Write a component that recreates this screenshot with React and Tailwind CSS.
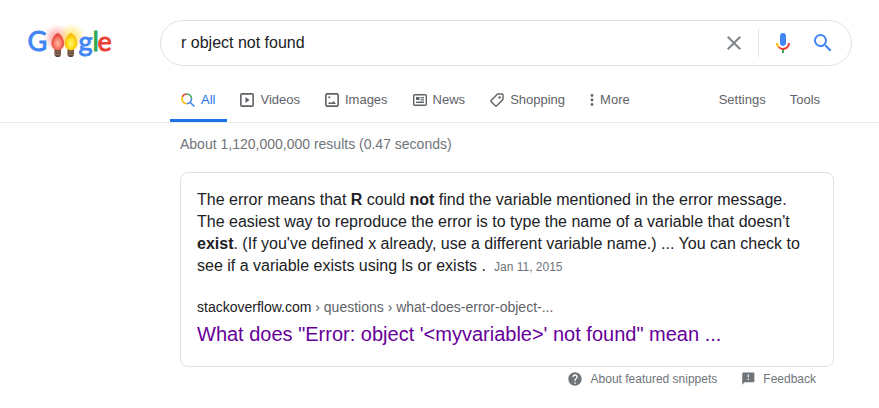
const TABS = [
  { label: 'Videos', Icon: VideoIcon },
  { label: 'Images', Icon: ImageIcon },
  { label: 'News', Icon: NewsIcon },
  { label: 'Shopping', Icon: TagIcon },
];

function Logo() {
  return (
    <svg width="100" height="46" viewBox="0 0 100 46" role="img" aria-label="Google" className="block">
      <defs>
        <radialGradient id="redGlow">
          <stop offset="0" stopColor="#f44336" stopOpacity="0.6" />
          <stop offset="0.5" stopColor="#f66" stopOpacity="0.35" />
          <stop offset="1" stopColor="#f88" stopOpacity="0" />
        </radialGradient>
        <radialGradient id="yellowGlow">
          <stop offset="0" stopColor="#ffd600" stopOpacity="0.7" />
          <stop offset="0.5" stopColor="#ffe14d" stopOpacity="0.45" />
          <stop offset="1" stopColor="#fff176" stopOpacity="0" />
        </radialGradient>
        <radialGradient id="redBulb" cy="0.6">
          <stop offset="0" stopColor="#ffc0a0" />
          <stop offset="0.5" stopColor="#f98370" />
          <stop offset="1" stopColor="#e8453a" />
        </radialGradient>
        <radialGradient id="yellowBulb" cy="0.6">
          <stop offset="0" stopColor="#fff27a" />
          <stop offset="0.55" stopColor="#ffe01e" />
          <stop offset="1" stopColor="#f9b90a" />
        </radialGradient>
      </defs>
      <circle cx="37" cy="18" r="14" fill="url(#redGlow)" />
      <circle cx="52" cy="17" r="14" fill="url(#yellowGlow)" />
      <g fontFamily="Lato, sans-serif" fontSize="27" strokeWidth="0.9">
        <text x="7.500" y="30.500" fill="#4285f4" stroke="#4285f4">G</text>
        <text x="58.500" y="30.500" fill="#4285f4" stroke="#4285f4">g</text>
        <text x="72.500" y="30.500" fill="#34a853" stroke="#34a853">l</text>
        <text x="77.500" y="30.500" fill="#ea4335" stroke="#ea4335">e</text>
      </g>
      <path d="M34.500 29h6.500v6l-1.500 2h-3.500l-1.500-2z" fill="#65493b" />
      <path d="M34.500 32h6.500M34.500 34.500h6.500" stroke="#a08468" strokeWidth="0.800" />
      <path d="M47.500 29h6.500v6l-1.500 2h-3.500l-1.500-2z" fill="#65493b" />
      <path d="M47.500 32h6.500M47.500 34.500h6.500" stroke="#a08468" strokeWidth="0.800" />
      <path d="M37.800 13c3.500 1.500 6.300 6 6.300 10.500 0 3.500-2.500 6.800-6.300 6.800s-6.300-3.300-6.300-6.800c0-4.500 2.800-9 6.300-10.500z" fill="url(#redBulb)" />
      <path d="M50.900 13c3.500 1.500 6.300 6 6.300 10.500 0 3.500-2.500 6.800-6.300 6.800s-6.300-3.300-6.300-6.800c0-4.500 2.800-9 6.300-10.500z" fill="url(#yellowBulb)" />
    </svg>
  );
}

function CloseIcon() {
  return (
    <svg width="24" height="24" viewBox="0 0 24 24" fill="#80868b" aria-hidden="true">
      <path d="M19 6.410L17.590 5 12 10.590 6.410 5 5 6.410 10.590 12 5 17.590 6.410 19 12 13.410 17.590 19 19 17.590 13.410 12z" />
    </svg>
  );
}

function MicIcon() {
  return (
    <svg width="24" height="24" viewBox="0 0 24 24" aria-hidden="true">
      <path fill="#4285f4" d="M12 15c1.660 0 3-1.310 3-2.970V4.970C15 3.310 13.660 2 12 2S9 3.310 9 4.970v7.060C9 13.690 10.340 15 12 15z" />
      <path fill="#34a853" d="M11 18.080h2V22h-2z" />
      <path fill="#fbbc05" d="M7.050 16.870C5.780 15.590 5 13.870 5 12h2c0 1.380.560 2.570 1.420 3.470l-1.370 1.400z" />
      <path fill="#ea4335" d="M12 16.930a4.970 5.250 0 0 1-3.540-1.550L7.050 16.870c1.270 1.260 2.990 2.060 4.950 2.060 3.920 0 7-3.120 7-6.930h-2c0 2.700-2.240 4.930-5 4.930z" />
    </svg>
  );
}

function SearchIcon() {
  return (
    <svg width="24" height="24" viewBox="0 0 24 24" fill="#4285f4" aria-hidden="true">
      <path d="M15.500 14h-.790l-.280-.270A6.471 6.471 0 0 0 16 9.500 6.500 6.500 0 1 0 9.500 16c1.610 0 3.090-.590 4.230-1.570l.270.280v.790l5 4.990L20.490 19l-4.990-5zm-6 0C7.010 14 5 11.990 5 9.500S7.010 5 9.500 5 14 7.010 14 9.500 11.990 14 9.500 14z" />
    </svg>
  );
}

function ColorSearchIcon() {
  return (
    <svg width="14" height="14" viewBox="0 0 14 14" fill="none" strokeWidth="1.600" aria-hidden="true">
      <path d="M1.400 3.800A4.800 4.800 0 0 1 5.700 1" stroke="#ea4335" />
      <path d="M5.700 1A4.800 4.800 0 0 1 10.500 5.800" stroke="#34a853" />
      <path d="M10.500 5.800A4.800 4.800 0 0 1 5.700 10.600M9.100 9.200l4.300 4.300" stroke="#4285f4" />
      <path d="M5.700 10.600A4.800 4.800 0 0 1 1.400 3.800" stroke="#fbbc05" />
    </svg>
  );
}

function VideoIcon() {
  return (
    <svg width="14" height="14" viewBox="0 0 14 14" aria-hidden="true">
      <rect x="0.850" y="0.850" width="12.300" height="12.300" rx="1.200" fill="none" stroke="currentColor" strokeWidth="1.600" />
      <path d="M5.500 4v6L9.500 7z" fill="currentColor" />
    </svg>
  );
}

function ImageIcon() {
  return (
    <svg width="14" height="14" viewBox="0 0 14 14" aria-hidden="true">
      <rect x="0.850" y="0.850" width="12.300" height="12.300" rx="1.200" fill="none" stroke="currentColor" strokeWidth="1.600" />
      <circle cx="4.300" cy="4.300" r="1.100" fill="currentColor" />
      <path d="M3 11L4.900 8.800 6.500 10 8.700 7.900 11 11z" fill="currentColor" />
    </svg>
  );
}

function NewsIcon() {
  return (
    <svg width="14" height="14" viewBox="0 0 14 14" aria-hidden="true">
      <rect x="0.700" y="1.700" width="12.600" height="10.600" rx="1" fill="none" stroke="currentColor" strokeWidth="1.400" />
      <path d="M3 4h3.500v3H3zM7.500 4H11v1.200H7.500zM7.500 6.200H11v1.200H7.500zM3 8.600h8v1.300H3z" fill="currentColor" />
    </svg>
  );
}

function TagIcon() {
  return (
    <svg width="14" height="14" viewBox="0 0 14 14" aria-hidden="true">
      <path d="M8 1h4.200a.8.8 0 0 1 .8.8V6a1 1 0 0 1-.3.700L6.700 12.700a1 1 0 0 1-1.400 0L1.300 8.700a1 1 0 0 1 0-1.400L7.300 1.300A1 1 0 0 1 8 1z" fill="none" stroke="currentColor" strokeWidth="1.400" />
      <circle cx="9.600" cy="4.400" r="1.200" fill="currentColor" />
    </svg>
  );
}

function DotsIcon() {
  return (
    <svg width="4" height="14" viewBox="0 0 4 14" fill="currentColor" aria-hidden="true">
      <circle cx="2" cy="2.500" r="1.400" />
      <circle cx="2" cy="7" r="1.400" />
      <circle cx="2" cy="11.500" r="1.400" />
    </svg>
  );
}

function HelpIcon() {
  return (
    <svg width="16" height="16" viewBox="0 0 24 24" fill="currentColor" aria-hidden="true">
      <path d="M12 2C6.480 2 2 6.480 2 12s4.480 10 10 10 10-4.480 10-10S17.520 2 12 2zm1 17h-2v-2h2v2zm2.070-7.750l-.9.920C13.450 12.900 13 13.500 13 15h-2v-.5c0-1.100.450-2.100 1.170-2.830l1.240-1.260c.370-.360.590-.860.590-1.410 0-1.100-.9-2-2-2s-2 .9-2 2H8c0-2.210 1.790-4 4-4s4 1.790 4 4c0 .880-.360 1.680-.930 2.250z" />
    </svg>
  );
}

function FeedbackIcon() {
  return (
    <svg width="14" height="14" viewBox="0 1 23 23" fill="currentColor" aria-hidden="true">
      <path d="M20 2H4c-1.100 0-1.990.9-1.990 2L2 22l4-4h14c1.100 0 2-.9 2-2V4c0-1.100-.9-2-2-2zm-7 12h-2v-2h2v2zm0-4h-2V5h2v5z" />
    </svg>
  );
}

export default function App() {
  return (
    <div className="min-h-screen bg-white pt-5 font-['Liberation_Sans',Arial,sans-serif] text-[#202124]">
      <header className="border-b border-[#ebebeb]">
        <div className="flex items-center pr-[27px]">
          <a href="#home" className="w-40 shrink-0 pl-5">
            <Logo />
          </a>
          <form
            role="search"
            onSubmit={(e) => e.preventDefault()}
            className="flex h-[46px] w-full max-w-[692px] min-w-0 items-center rounded-full border border-[#dfe1e5] pr-4 pl-5"
          >
            <input
              type="text"
              aria-label="Search"
              defaultValue="r object not found"
              className="min-w-0 flex-1 text-base outline-none"
            />
            <button type="reset" aria-label="Clear" className="shrink-0">
              <CloseIcon />
            </button>
            <span className="mx-3 h-7 w-px shrink-0 bg-[#dfe1e5]" />
            <button type="button" aria-label="Search by voice" className="shrink-0">
              <MicIcon />
            </button>
            <button type="submit" aria-label="Google Search" className="ml-4 shrink-0">
              <SearchIcon />
            </button>
          </form>
        </div>

        <nav className="mt-2 flex h-12 gap-0.5 pl-[170px] text-[13px] text-[#5f6368]">
          <a
            href="#all"
            aria-current="page"
            className="flex items-center gap-1.5 border-b-[3px] border-[#1a73e8] pt-[7px] pr-3 pl-[11px] text-[#1a73e8]"
          >
            <ColorSearchIcon />
            All
          </a>
          {TABS.map(({ label, Icon }) => (
            <a key={label} href={'#' + label.toLowerCase()} className="flex items-center gap-1.5 pt-1 pr-3 pl-[11px]">
              <Icon />
              {label}
            </a>
          ))}
          <button type="button" className="flex items-center gap-1.5 pt-1 pr-3 pl-[11px]">
            <DotsIcon />
            More
          </button>
          <div className="ml-[75px] flex gap-6 pt-1">
            <button type="button">Settings</button>
            <button type="button">Tools</button>
          </div>
        </nav>
      </header>

      <main className="max-w-[834px] pl-[180px]">
        <p className="pt-[11px] text-sm leading-5 text-[#70757a]">About 1,120,000,000 results (0.47 seconds)</p>

        <article className="mt-[18px] rounded-lg border border-[#dfe1e5] px-4 pt-4 pb-[19px]">
          <p className="text-base leading-[22px]">
            The error means that <b>R</b> could <b>not</b> find the variable mentioned in the error message. The easiest
            way to reproduce the error is to type the name of a variable that doesn't <b>exist</b>. (If you've defined x
            already, use a different variable name.) ... You can check to see if a variable exists using ls or exists .
            <span className="ml-2 text-xs text-[#70757a]">Jan 11, 2015</span>
          </p>
          <a href="#result" className="mt-5 block">
            <cite className="block text-sm leading-5 not-italic">
              stackoverflow.com<span className="text-[#5f6368]"> › questions › what-does-error-object-...</span>
            </cite>
            <h3 className="mt-1 text-xl leading-[26px] text-[#609]">
              What does "Error: object '&lt;myvariable&gt;' not found" mean ...
            </h3>
          </a>
        </article>

        <footer className="mt-1 flex justify-end gap-6 pr-[18px] text-xs text-[#70757a]">
          <a href="#about-snippets" className="flex items-center gap-2">
            <HelpIcon />
            About featured snippets
          </a>
          <button type="button" className="flex items-center gap-2">
            <FeedbackIcon />
            Feedback
          </button>
        </footer>
      </main>
    </div>
  );
}
